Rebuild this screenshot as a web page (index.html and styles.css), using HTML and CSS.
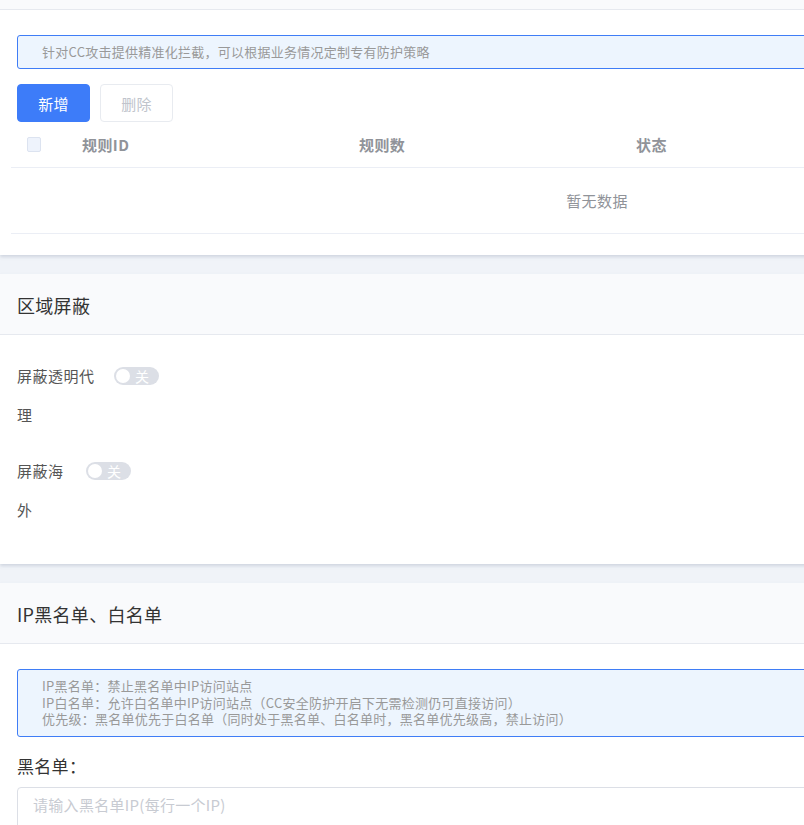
FILE: index.html
```html
<!DOCTYPE html>
<html lang="zh-CN">
<head>
<meta charset="utf-8">
<title>防护设置</title>
<link rel="stylesheet" href="styles.css">
</head>
<body>
<div class="page">
  <section class="card">
    <div class="card-head card-head-cut"></div>
    <div class="card-body first-body">
      <div class="alert single">针对CC攻击提供精准化拦截，可以根据业务情况定制专有防护策略</div>
      <div class="btns">
        <button class="btn btn-primary">新增</button>
        <button class="btn btn-disabled">删除</button>
      </div>
      <div class="table">
        <div class="tr th">
          <div class="td col-check"><span class="checkbox"></span></div>
          <div class="td col">规则ID</div>
          <div class="td col">规则数</div>
          <div class="td col">状态</div>
          <div class="td col">操作</div>
        </div>
        <div class="empty">暂无数据</div>
      </div>
    </div>
  </section>

  <section class="card">
    <div class="card-head"><h2 class="title">区域屏蔽</h2></div>
    <div class="card-body region-body">
      <div class="form-item">
        <label class="label label-a">屏蔽透明代理</label>
        <span class="switch"><span class="knob"></span><span class="switch-text">关</span></span>
      </div>
      <div class="form-item">
        <label class="label label-b">屏蔽海外</label>
        <span class="switch"><span class="knob"></span><span class="switch-text">关</span></span>
      </div>
    </div>
  </section>

  <section class="card">
    <div class="card-head"><h2 class="title">IP黑名单、白名单</h2></div>
    <div class="card-body ip-body">
      <div class="alert">
        IP黑名单：禁止黑名单中IP访问站点<br>
        IP白名单：允许白名单中IP访问站点（CC安全防护开启下无需检测仍可直接访问）<br>
        优先级：黑名单优先于白名单（同时处于黑名单、白名单时，黑名单优先级高，禁止访问）
      </div>
      <div class="sub-title">黑名单：</div>
      <textarea class="textarea" placeholder="请输入黑名单IP(每行一个IP)"></textarea>
    </div>
  </section>
</div>
</body>
</html>
```

FILE: styles.css
```css
html, body {
  margin: 0;
  padding: 0;
  background: #f0f3f8;
  overflow: hidden;
}
body {
  font-family: "Noto Sans CJK SC", "Noto Sans", sans-serif;
  color: #333;
}
.page {
  width: 1200px;
  display: flex;
  flex-direction: column;
  gap: 19px;
}
.card {
  background: #fff;
  box-shadow: 0 2px 3px rgba(150, 160, 180, 0.35);
}
.card-head {
  background: #f9fafc;
  border-bottom: 1px solid #e6e9ef;
  height: 60px;
  padding: 0 17px;
  display: flex;
  align-items: center;
}
.card-head-cut {
  height: 9px;
}
.title {
  margin: 0;
  font-size: 18px;
  font-weight: normal;
  color: #333;
  line-height: 24px;
  letter-spacing: 0.3px;
  padding-top: 2px;
}
.card-body {
  padding: 25px 17px 21px;
}
.alert {
  border: 1px solid #3f7df6;
  background: #edf5fe;
  border-radius: 3px;
  padding: 8px 24px;
  font-size: 13px;
  line-height: 16.5px;
  color: #999;
  letter-spacing: 0.25px;
}
.alert.single {
  line-height: 16px;
}
.btns {
  display: flex;
  gap: 10px;
  margin-top: 15px;
}
.btn {
  width: 73px;
  height: 38px;
  border-radius: 4px;
  font-family: inherit;
  font-size: 15px;
  padding: 0;
  border: 1px solid transparent;
  letter-spacing: 0.3px;
}
.btn-primary {
  background: #3d7cf9;
  color: #fff;
  border-color: #3d7cf9;
}
.btn-disabled {
  background: #fff;
  color: #c0c4cc;
  border-color: #e8ebf0;
}
.table {
  margin-left: -6px;
  width: 1172px;
}
.tr {
  display: flex;
  align-items: center;
  height: 45px;
  border-bottom: 1px solid #ebeef5;
}
.th .td {
  font-size: 15px;
  font-weight: bold;
  color: #909399;
  letter-spacing: 0.4px;
}
.col-check {
  width: 55px;
  padding-left: 16px;
  box-sizing: border-box;
  display: flex;
  align-items: center;
}
.checkbox {
  display: block;
  width: 12px;
  height: 13px;
  border: 1px solid #dce3f0;
  background: #eef3fc;
  border-radius: 2px;
}
.col {
  width: 277px;
  padding-left: 16px;
  box-sizing: border-box;
}
.empty {
  height: 65px;
  display: flex;
  align-items: center;
  justify-content: center;
  font-size: 15px;
  color: #909399;
  letter-spacing: 0.4px;
  border-bottom: 1px solid #ebeef5;
}
.region-body {
  padding: 21px 17px 35px;
  display: flex;
  flex-direction: column;
  gap: 17px;
}
.form-item {
  display: flex;
  align-items: flex-start;
}
.label {
  font-size: 15px;
  line-height: 39px;
  color: #555;
  letter-spacing: 0.5px;
}
.label-a {
  width: 79px;
  margin-right: 18px;
}
.label-b {
  width: 48px;
  margin-right: 21px;
}
.switch {
  margin-top: 11px;
  width: 45px;
  height: 18px;
  border-radius: 9px;
  background: #dcdfe6;
  display: flex;
  align-items: center;
  padding: 0 2px;
  box-sizing: border-box;
  gap: 5px;
}
.knob {
  width: 14px;
  height: 14px;
  border-radius: 50%;
  background: #fff;
}
.switch-text {
  font-size: 14px;
  color: #fff;
  line-height: 18px;
}
.ip-body {
  padding: 25px 17px 40px;
}
.sub-title {
  font-size: 17px;
  line-height: 24px;
  margin: 17px 0 9px;
  color: #333;
  letter-spacing: 0.3px;
}
.textarea {
  display: block;
  width: 100%;
  box-sizing: border-box;
  height: 100px;
  border: 1px solid #dcdfe6;
  border-radius: 4px;
  padding: 7px 15px;
  font-family: inherit;
  font-size: 15px;
  line-height: 20px;
  letter-spacing: 0.3px;
  resize: none;
  color: #333;
}
.textarea::placeholder {
  color: #c8cbd2;
}
```
